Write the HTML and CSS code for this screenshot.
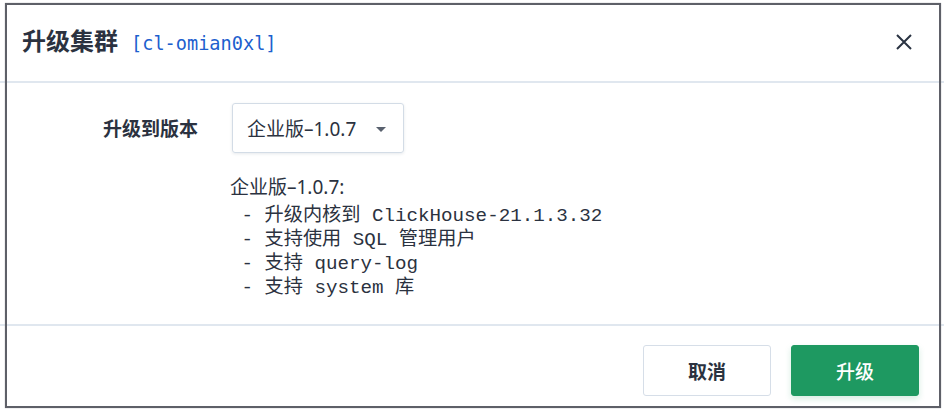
FILE: index.html
```html
<!DOCTYPE html>
<html lang="zh">
<head>
<meta charset="utf-8">
<link rel="stylesheet" href="styles.css">
</head>
<body>
<div class="dialog">
  <header class="dlg-head">
    <h2 class="dlg-title">升级集群<span class="cluster-id">[cl-omian0xl]</span></h2>
    <button class="close-btn" aria-label="close">
      <svg width="16" height="16" viewBox="0 0 16 16"><path d="M1 1 L15 15 M15 1 L1 15" stroke="#2a3342" stroke-width="2" fill="none"/></svg>
    </button>
  </header>
  <main class="dlg-body">
    <div class="form-row">
      <label class="form-label">升级到版本</label>
      <div class="select">
        <span class="select-value">企业版–1.0.7</span>
        <span class="caret"></span>
      </div>
    </div>
    <div class="desc">
      <div class="desc-title">企业版–1.0.7:</div>
<pre class="desc-list"> - 升级内核到 ClickHouse-21.1.3.32
 - 支持使用 SQL 管理用户
 - 支持 query-log
 - 支持 system 库</pre>
    </div>
  </main>
  <footer class="dlg-foot">
    <button class="btn btn-default">取消</button>
    <button class="btn btn-primary">升级</button>
  </footer>
</div>
<div class="frame"></div>
</body>
</html>
```

FILE: styles.css
```css
html, body {
  margin: 0;
  padding: 0;
  background: #ffffff;
}
body {
  width: 944px;
  height: 410px;
  position: relative;
  overflow: hidden;
  font-family: "Noto Sans", "Noto Sans CJK SC", sans-serif;
  color: #2b3240;
}
.dialog {
  display: flex;
  flex-direction: column;
  height: 410px;
}
.dlg-head {
  height: 81px;
  border-bottom: 2px solid #e0e7ef;
  display: flex;
  align-items: center;
  justify-content: space-between;
  padding: 0 32px 0 22px;
  box-sizing: content-box;
}
.dlg-title {
  margin: 0;
  font-size: 24px;
  font-weight: 700;
  color: #2b3240;
  line-height: 1;
  font-family: "Noto Sans CJK SC", sans-serif;
}
.cluster-id {
  font-family: "DejaVu Sans Mono", "Liberation Mono", monospace;
  font-size: 18.6px;
  font-weight: 400;
  color: #1d5fce;
  margin-left: 13px;
}
.close-btn {
  background: none;
  border: 0;
  padding: 0;
  width: 16px;
  height: 16px;
  display: flex;
  margin-top: 2px;
}
.dlg-body {
  height: 243px;
  box-sizing: border-box;
  padding: 20px 0 0 103px;
  border-bottom: 2px solid #e0e7ef;
}
.form-row {
  display: flex;
  align-items: center;
}
.form-label {
  width: 129px;
  font-size: 19px;
  font-weight: 700;
  color: #2b3240;
  font-family: "Noto Sans CJK SC", sans-serif;
  margin-top: -2px;
}
.select {
  width: 172px;
  height: 50px;
  box-sizing: border-box;
  border: 1px solid #d3dce6;
  border-radius: 3px;
  box-shadow: 0 1px 3px rgba(60, 80, 110, 0.12);
  display: flex;
  align-items: center;
  justify-content: space-between;
  padding: 0 17px 0 14px;
}
.select-value {
  font-size: 19px;
  color: #2b3240;
}
.caret {
  width: 0;
  height: 0;
  border-left: 5px solid transparent;
  border-right: 5px solid transparent;
  border-top: 5px solid #59616e;
  margin-top: 2px;
}
.desc {
  margin: 22px 0 0 127px;
}
.desc-title {
  font-size: 19px;
  line-height: 24px;
  color: #2b3240;
  margin-bottom: 5px;
}
.desc-list {
  margin: 0;
  font-family: "Liberation Mono", "Noto Sans CJK SC", monospace;
  font-size: 19.2px;
  line-height: 24px;
  color: #2b3240;
}
.dlg-foot {
  flex: 1;
  display: flex;
  justify-content: flex-end;
  align-items: flex-start;
  gap: 20px;
  padding: 19px 25px 0 0;
}
.btn {
  width: 128px;
  height: 51px;
  border-radius: 3px;
  font-size: 19px;
  font-family: "Noto Sans CJK SC", sans-serif;
  cursor: pointer;
}
.btn-default {
  background: #ffffff;
  border: 1px solid #d6dee8;
  color: #2b3240;
  font-weight: 700;
}
.btn-primary {
  background: #1e9961;
  border: 1px solid #1e9961;
  color: #ffffff;
  font-weight: 500;
  box-shadow: 0 3px 6px rgba(30, 153, 97, 0.18);
}
.frame {
  position: absolute;
  left: 5px;
  top: 3px;
  width: 936px;
  height: 405px;
  box-sizing: border-box;
  border: 2px solid #5e6068;
  box-shadow: 0 0 1px #a0a2a8;
  pointer-events: none;
}
```
